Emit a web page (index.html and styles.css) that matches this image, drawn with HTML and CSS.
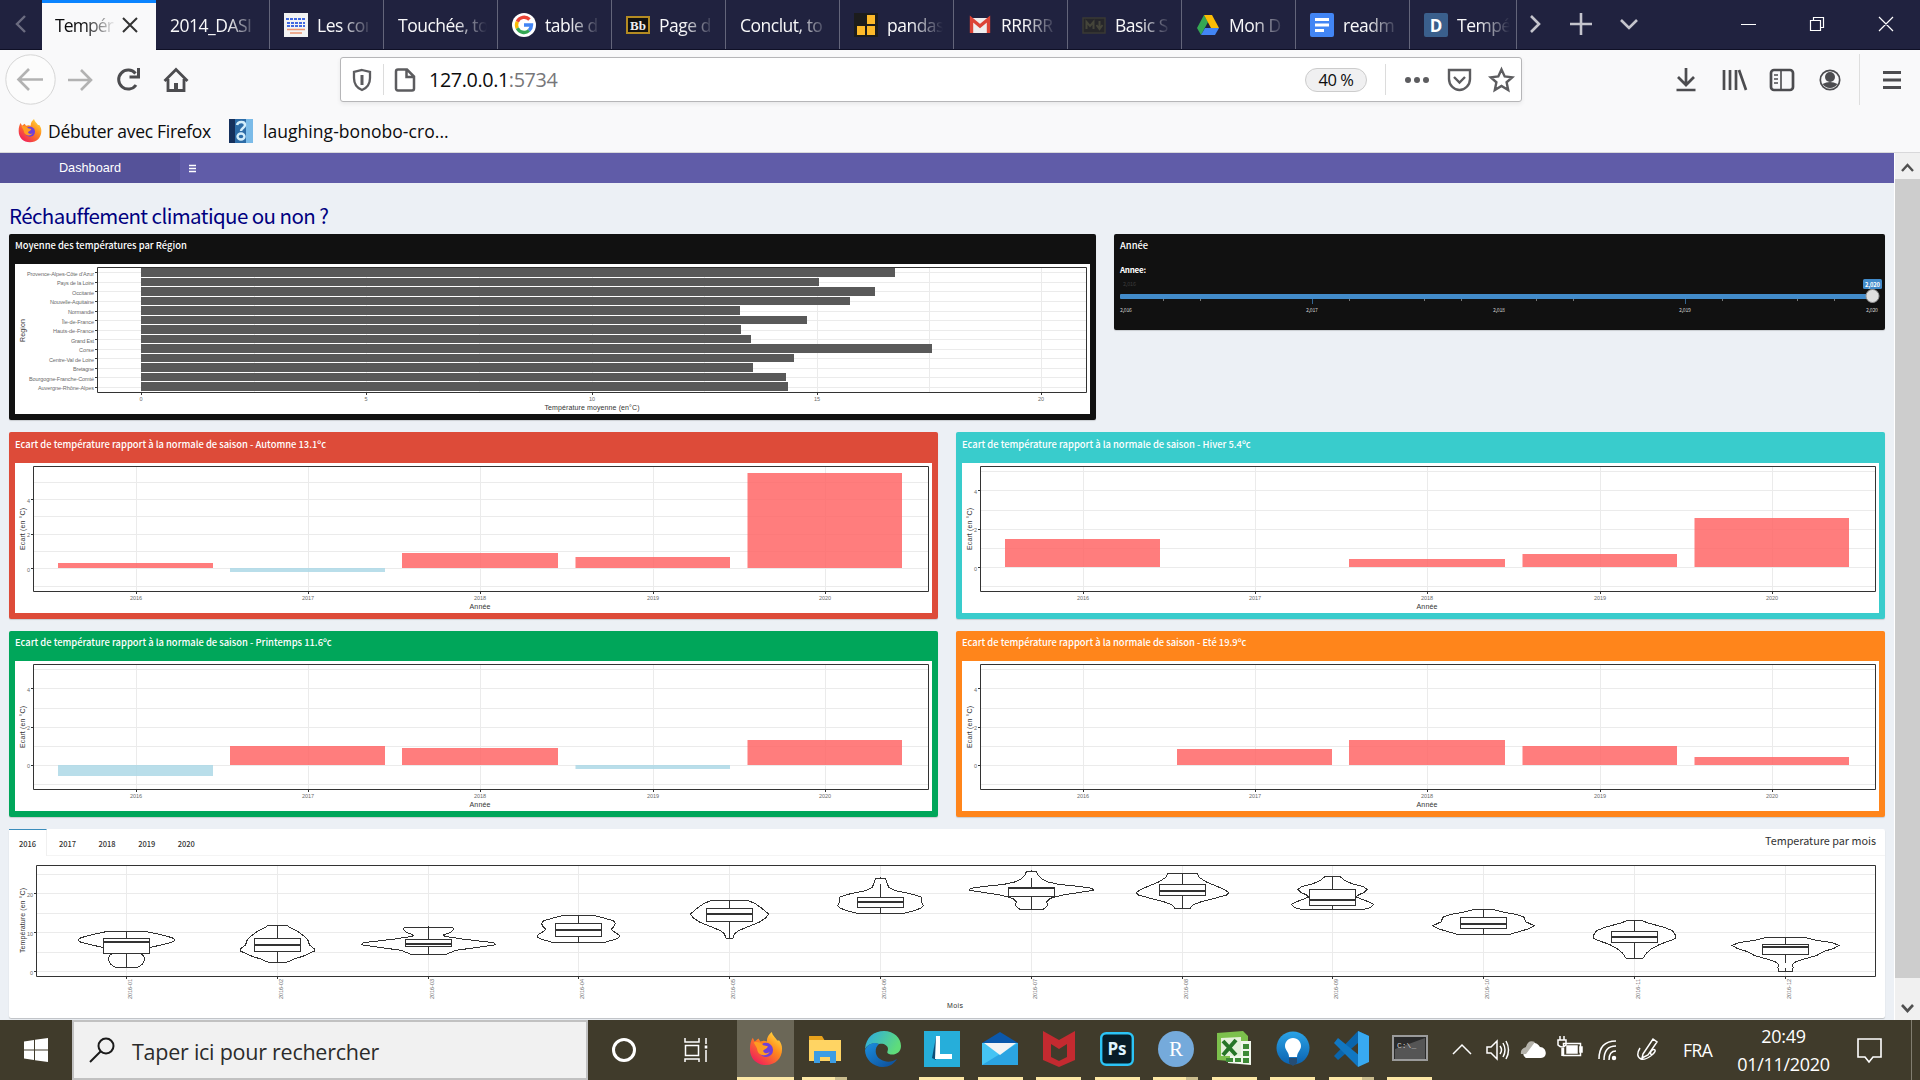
FILE: index.html
```html
<!DOCTYPE html>
<html lang="fr">
<head>
<meta charset="utf-8">
<title>Températures</title>
<link rel="stylesheet" href="styles.css">
</head>
<body>
<svg class="defs" width="0" height="0">
  <defs>
    <linearGradient id="fox" x1="1" y1="0" x2="0.2" y2="1"><stop offset="0" stop-color="#fff04a"/><stop offset=".45" stop-color="#ff8a1c"/><stop offset="1" stop-color="#f0195e"/></linearGradient>
    <linearGradient id="edgeA" x1="0" y1="0" x2="1" y2=".4"><stop offset="0" stop-color="#2aa8e8"/><stop offset="1" stop-color="#5fdc7a"/></linearGradient>
    <linearGradient id="edgeB" x1="0" y1="0" x2="1" y2="1"><stop offset="0" stop-color="#1b8fe0"/><stop offset="1" stop-color="#0c4a94"/></linearGradient>
    <linearGradient id="bulb" x1="0" y1="0" x2="0" y2="1"><stop offset="0" stop-color="#2ba3e6"/><stop offset="1" stop-color="#0b62b0"/></linearGradient>
    <symbol id="firefox" viewBox="0 0 36 36"><path fill="url(#fox)" d="M18 35C8 35 1 28 1 18c0-5 1-9 3-12l2 4 4-3 2 3c3-1 5-1 7 0 0-5 2-7 5-10 1 4 4 6 6 9l2 0c2 3 3 5 3 9 0 10-7 17-17 17z"/><circle cx="18" cy="19" r="7.500" fill="#7040d8"/><path fill="#ff9c22" d="M5 11c4-1 8 0 10 3l5 1c-1 3-4 3-5 5 1 3 5 3 7 1-2 5-11 5-13-1 0-3-2-5-4-9z"/></symbol>
  </defs>
</svg>

<header class="tabbar">
  <svg class="scroll-prev" width="42" height="50" viewBox="0 0 42 50"><path d="M25 16l-8 8 8 8" fill="none" stroke="#6b6c80" stroke-width="2.4"/></svg>
  <div class="tab active"><span class="label">Tempér</span><svg width="16" height="16" viewBox="0 0 16 16"><path d="M1 1l14 14M15 1L1 15" stroke="#333" stroke-width="2"/></svg></div>
  <div class="tab"><span class="label">2014_DASI</span></div>
  <div class="tab"><svg width="24" height="24" viewBox="0 0 24 24"><path fill="#f3f3f3" d="M0 0h24v24H0z"/><path d="M2 6h20M3 10h18M3 13h18" stroke="#4168e0" stroke-width="2" stroke-dasharray="3 1"/><path d="M3 16.500h18M6 20h12" stroke="#ec9470" stroke-width="1.4"/></svg><span class="label">Les coı</span></div>
  <div class="tab"><span class="label">Touchée, to</span></div>
  <div class="tab"><svg width="24" height="24" viewBox="0 0 24 24"><circle cx="12" cy="12" r="12" fill="#fff"/><g fill="none" stroke-width="3.400"><path stroke="#ea4335" d="M17.500 6.500a7.500 7.500 0 0 0-12.200 2.200"/><path stroke="#fbbc05" d="M5.300 8.700a7.500 7.500 0 0 0 0 6.600"/><path stroke="#34a853" d="M5.300 15.300a7.500 7.500 0 0 0 11.700 2.200"/><path stroke="#4285f4" d="M17 17.500A7.500 7.500 0 0 0 19.500 12H12"/></g></svg><span class="label">table d</span></div>
  <div class="tab"><svg width="24" height="24" viewBox="0 0 24 24"><path fill="#111" stroke="#b48b22" stroke-width="2" d="M1 4h22v16H1z"/><text x="12" y="17" class="ico-serif" text-anchor="middle">Bb</text></svg><span class="label">Page d</span></div>
  <div class="tab"><span class="label">Conclut, to</span></div>
  <div class="tab"><svg width="24" height="24" viewBox="0 0 24 24"><path fill="#1c1c1c" d="M0 0h24v24H0z"/><path fill="#fdb92a" d="M13 2h8v9h-8zM3 13h8v9H3zM13 13h8v9h-8z"/></svg><span class="label">pandas</span></div>
  <div class="tab"><svg width="24" height="24" viewBox="0 0 24 24"><path fill="#eee" d="M2 5h20v15H2z"/><path d="M3.500 20V6l8.500 7 8.500-7v14" fill="none" stroke="#dc4437" stroke-width="3.4"/></svg><span class="label">RRRRR</span></div>
  <div class="tab"><svg width="24" height="24" viewBox="0 0 24 24"><path fill="#26262a" stroke="#3a3a34" stroke-width="1.500" d="M1 5h22v15H1z"/><path d="M4.500 16V9l3.500 4 3.500-4v7M17.500 8v7m-3-3l3 4 3-4" fill="none" stroke="#45453a" stroke-width="2"/></svg><span class="label">Basic S</span></div>
  <div class="tab"><svg width="24" height="24" viewBox="0 0 24 24"><path fill="#34a853" d="M8 2L1 15l4 7L12 9z"/><path fill="#fbbc05" d="M8 2h8l7 13h-8z"/><path fill="#4285f4" d="M9 15h14l-4 7H5z"/></svg><span class="label">Mon D</span></div>
  <div class="tab"><svg width="24" height="24" viewBox="0 0 24 24"><rect width="24" height="24" rx="2" fill="#4285f4"/><path d="M5 6.500h14M5 12h14M5 17.500h9" stroke="#fff" stroke-width="3"/></svg><span class="label">readm</span></div>
  <div class="tab last"><svg width="24" height="24" viewBox="0 0 24 24"><rect width="24" height="24" rx="2" fill="#3a5f8c"/><text x="12" y="18.500" class="ico-bold" text-anchor="middle">D</text></svg><span class="label">Tempé</span></div>
  <svg class="tab-tools" width="140" height="50" viewBox="0 0 140 50" fill="none" stroke="#c4c4cc" stroke-width="2.600"><path d="M14 16l8 8-8 8M53 24h22M64 13v22M104 20l8 8 8-8"/></svg>
  <svg class="win-tools" width="180" height="50" viewBox="0 0 180 50" fill="none" stroke="#fff" stroke-width="1.200"><path d="M1 24.500h15M70.500 20.500h10v10h-10zM73.500 20v-2.500h10v10h-3M139 17l14 14m0-14l-14 14"/></svg>
</header>

<nav class="toolbar">
  <svg width="200" height="60" viewBox="0 0 200 60" fill="none" stroke-width="2.600"><circle cx="30.500" cy="29.500" r="24.700" stroke="#d6d6d6" stroke-width="1" fill="#fcfcfc"/><path stroke="#b2b2b2" d="M43 29.500H19M29 19L18.500 29.500 29 40"/><path stroke="#b2b2b2" d="M68 30h22M81 20l10 10-10 10"/><g stroke="#4c4c4f" stroke-width="3"><path d="M136 35a9.500 9.500 0 1 1-.5-11.500"/><path d="M138.500 18v9h-9"/><path d="M164.500 31L176 19.500 187.500 31M168 29v11.500h16V29" stroke-width="2.800"/><path d="M176 40v-7" stroke-width="4"/></g></svg>
  <div class="urlbar">
    <svg class="shield" width="20" height="24" viewBox="0 0 20 24" fill="none" stroke="#5c5c5f" stroke-width="2.300"><path d="M10 2L18 4v6c0 6-3 10-8 12-5-2-8-6-8-12V4z"/><path d="M10 7v10" stroke-width="3"/></svg>
    <i class="rule"></i>
    <svg class="page" width="22" height="24" viewBox="0 0 22 24" fill="none" stroke="#5c5c5f" stroke-width="2.500"><path d="M2 3.500C2 2 3 1.500 4 1.500h9l7 7v12c0 1.500-.7 2-2 2H4c-1.300 0-2-.7-2-2zM12.500 2v7H20"/></svg>
    <span class="address">127.0.0.1<em>:5734</em></span>
    <span class="zoom">40 %</span>
    <i class="rule"></i>
    <svg class="url-tools" width="112" height="26" viewBox="0 0 112 26" fill="none" stroke="#5c5c5f" stroke-width="2.400"><g fill="#5c5c5f" stroke="none"><circle cx="6" cy="13" r="3"/><circle cx="15" cy="13" r="3"/><circle cx="24" cy="13" r="3"/></g><path d="M47 3h21v9c0 6-5 11-10.500 11S47 18 47 12zM52 10l5.500 5.500L63 10M99.500 2.500l3.200 7 7.500.8-5.600 5 1.600 7.700-6.700-4-6.700 4 1.600-7.700-5.600-5 7.500-.8z"/></svg>
  </div>
  <svg class="right-tools" width="240" height="60" viewBox="0 0 240 60" fill="none" stroke="#4c4c4f" stroke-width="2.700"><path d="M6 18v17M-2 27l8 8 8-8M-3.500 40h19"/><path d="M44 20v20M50 20v20M56 20v20M59 20l7 20"/><rect x="91" y="20" width="22" height="20" rx="3"/><path d="M101 20v20M94 25h4m-4 4h4m-4 4h4" stroke-width="1.600"/><circle cx="150" cy="30" r="9.700" stroke-width="1.700"/><g fill="#4c4c4f" stroke="none"><circle cx="150" cy="27" r="5"/><path d="M142.500 34q7.500-4 15 0-3 4-7.500 4t-7.500-4z"/></g><path d="M179.500 4v51" stroke="#dedede" stroke-width="1"/><path d="M203 22.500h18M203 30h18M203 37.500h18" stroke-width="3"/></svg>
</nav>

<div class="bookmarks">
  <svg width="24" height="24"><use href="#firefox"/></svg><span class="b1">Débuter avec Firefox</span>
  <svg class="bono" width="24" height="24" viewBox="0 0 24 24"><path fill="#15305c" d="M0 0h24v24H0z"/><path fill="#2d6ca7" d="M6 0h18v24H6z"/><path fill="#7bbbe8" d="M17 0h7v24h-7z"/><path d="M8 6c1-4 8-4 8 0 0 3-4 3-4 6" fill="none" stroke="#d4eefb" stroke-width="2.500"/><ellipse cx="12" cy="17.500" rx="3.500" ry="3" fill="none" stroke="#d4eefb" stroke-width="2.400"/></svg><span class="b2">laughing-bonobo-cro...</span>
</div>

<div class="viewport">
  <div class="page-body">
    <div class="app-head"><span class="brand">Dashboard</span><svg width="8" height="30" viewBox="0 0 8 30"><path d="M1 12.500h7M1 15.500h7M1 18.500h7" stroke="#fff" stroke-width="1.300"/></svg></div>
    <main>
      <h1>Réchauffement climatique ou non ?</h1>
      <div class="row top">
        <section class="card black region">
          <h2>Moyenne des températures par Région</h2>
          <svg class="plot" width="1075" height="150" viewBox="15 264 1075 150">
            <path class="grid" d="M141.500 268v124M254.500 268v124M366.500 268v124M479.500 268v124M592.500 268v124M704.500 268v124M817.500 268v124M929.500 268v124M1041.500 268v124M98 272.500h988M98 282.500h988M98 291.500h988M98 301.500h988M98 311.500h988M98 320.500h988M98 330.500h988M98 339.500h988M98 349.500h988M98 358.500h988M98 368.500h988M98 377.500h988M98 387.500h988"/>
            <path fill="#595959" d="M141 268h754v9H141zM141 278h678v8H141zM141 287h734v9H141zM141 297h709v8H141zM141 306h599v9H141zM141 316h666v8H141zM141 325h600v9H141zM141 335h610v8H141zM141 344h791v9H141zM141 354h653v8H141zM141 363h612v9H141zM141 373h645v8H141zM141 382h647v9H141z"/>
            <path class="frame" d="M97.500 267.500h989v125h-989z"/>
            <path class="frame" d="M95 272.500h2M95 282.500h2M95 291.500h2M95 301.500h2M95 311.500h2M95 320.500h2M95 330.500h2M95 339.500h2M95 349.500h2M95 358.500h2M95 368.500h2M95 377.500h2M95 387.500h2M141.500 393v2M366.500 393v2M592.500 393v2M817.500 393v2M1041.500 393v2"/>
            <g class="tick" text-anchor="end">
              <text x="94" y="276" textLength="67">Provence-Alpes-Côte d'Azur</text><text x="94" y="285" textLength="37">Pays de la Loire</text><text x="94" y="295" textLength="22">Occitanie</text><text x="94" y="304" textLength="44">Nouvelle-Aquitaine</text><text x="94" y="314" textLength="26">Normandie</text><text x="94" y="324" textLength="32">Île-de-France</text><text x="94" y="333" textLength="41">Hauts-de-France</text><text x="94" y="343" textLength="23">Grand Est</text><text x="94" y="352" textLength="15">Corse</text><text x="94" y="362" textLength="45">Centre-Val de Loire</text><text x="94" y="371" textLength="21">Bretagne</text><text x="94" y="381" textLength="65">Bourgogne-Franche-Comté</text><text x="94" y="390" textLength="56">Auvergne-Rhône-Alpes</text>
            </g>
            <g class="tick" text-anchor="middle"><text x="141" y="401">0</text><text x="366" y="401">5</text><text x="592" y="401">10</text><text x="817" y="401">15</text><text x="1041" y="401">20</text></g>
            <text class="axis" x="592" y="410" text-anchor="middle" textLength="95">Température moyenne (en°C)</text>
            <text class="axis" transform="translate(25 342) rotate(-90)" textLength="23">Region</text>
          </svg>
        </section>
        <section class="card black year">
          <h2>Année</h2>
          <svg width="771" height="66" viewBox="1114 264 771 66">
            <text x="1120" y="273" class="ann" textLength="26">Annee:</text>
            <text x="1123" y="285.500" class="dim" textLength="13">2,016</text>
            <path stroke="#777" d="M1163.500 299v2M1200.500 299v2M1349.500 299v2M1424.500 299v2M1461.500 299v2M1536.500 299v2M1573.500 299v2M1722.500 299v2M1797.500 299v2M1834.500 299v2"/>
            <path stroke="#428bca" opacity=".7" d="M1312.500 299v5M1685.500 299v5"/>
            <rect x="1120" y="294" width="755" height="5" rx="1" fill="#428bca"/>
            <rect x="1863" y="279" width="19" height="10" rx="1.500" fill="#428bca"/>
            <text x="1865" y="286.500" class="bubble" textLength="15">2,020</text>
            <circle cx="1872.500" cy="296" r="6.500" fill="#dedede" stroke="#999"/>
            <g class="val" text-anchor="middle"><text x="1126" y="311.500" textLength="12">2,016</text><text x="1312" y="311.500" textLength="12">2,017</text><text x="1499" y="311.500" textLength="12">2,018</text><text x="1685" y="311.500" textLength="12">2,019</text><text x="1872" y="311.500" textLength="12">2,020</text></g>
          </svg>
        </section>
      </div>

      <div class="row seasons">
        <section class="card red">
          <h2>Ecart de température rapport à la normale de saison - Automne 13.1ºc</h2>
          <svg class="plot" width="917" height="150" viewBox="15 463 917 150">
            <path class="grid" d="M136.500 467v124M308.500 467v124M480.500 467v124M653.500 467v124M825.500 467v124M34 482.500h895M34 499.500h895M34 516.500h895M34 534.500h895M34 551.500h895M34 568.500h895M34 586.500h895"/>
            <path class="hot" d="M58 563h155v5H58zM402 553h156v15H402zM575.500 557H730v11H575.500zM747.500 473H902v95H747.500z"/><path class="cold" d="M230 568h155v4H230z"/>
            <path class="frame" d="M33.500 466.500h895v125h-895zM31 499.500h2M31 534.500h2M31 568.500h2M136.500 592v2M308.500 592v2M480.500 592v2M653.500 592v2M825.500 592v2"/>
            <g class="tick" text-anchor="middle"><text x="28.500" y="503">4</text><text x="28.500" y="537">2</text><text x="28.500" y="572">0</text><text x="136" y="600">2016</text><text x="308" y="600">2017</text><text x="480" y="600">2018</text><text x="653" y="600">2019</text><text x="825" y="600">2020</text></g>
            <text class="axis" x="480" y="609" text-anchor="middle" textLength="21">Année</text>
            <text class="axis" transform="translate(25 550) rotate(-90)" textLength="42">Ecart (en °C)</text>
          </svg>
        </section>
        <section class="card cyan">
          <h2>Ecart de température rapport à la normale de saison - Hiver 5.4ºc</h2>
          <svg class="plot" width="917" height="150" viewBox="15 463 917 150">
            <path class="grid" d="M136.500 467v124M308.500 467v124M480.500 467v124M653.500 467v124M825.500 467v124M34 471.500h895M34 490.500h895M34 510.500h895M34 529.500h895M34 548.500h895M34 567.500h895M34 586.500h895"/>
            <path class="hot" d="M58 539h155v28H58zM402 559h156v8H402zM575.500 554H730v13H575.500zM747.500 518H902v49H747.500z"/>
            <path class="frame" d="M33.500 466.500h895v125h-895zM31 490.500h2M31 529.500h2M31 567.500h2M136.500 592v2M308.500 592v2M480.500 592v2M653.500 592v2M825.500 592v2"/>
            <g class="tick" text-anchor="middle"><text x="28.500" y="494">4</text><text x="28.500" y="532">2</text><text x="28.500" y="571">0</text><text x="136" y="600">2016</text><text x="308" y="600">2017</text><text x="480" y="600">2018</text><text x="653" y="600">2019</text><text x="825" y="600">2020</text></g>
            <text class="axis" x="480" y="609" text-anchor="middle" textLength="21">Année</text>
            <text class="axis" transform="translate(25 550) rotate(-90)" textLength="42">Ecart (en °C)</text>
          </svg>
        </section>
      </div>

      <div class="row seasons lower">
        <section class="card green">
          <h2>Ecart de température rapport à la normale de saison - Printemps 11.6ºc</h2>
          <svg class="plot" width="917" height="150" viewBox="15 661 917 150">
            <path class="grid" d="M136.500 665v124M308.500 665v124M480.500 665v124M653.500 665v124M825.500 665v124M34 669.500h895M34 688.500h895M34 708.500h895M34 727.500h895M34 746.500h895M34 765.500h895M34 784.500h895"/>
            <path class="hot" d="M230 746h155v19H230zM402 748h156v17H402zM747.500 740H902v25H747.500z"/><path class="cold" d="M58 765h155v11H58zM575.500 765H730v4H575.500z"/>
            <path class="frame" d="M33.500 664.500h895v125h-895zM31 688.500h2M31 727.500h2M31 765.500h2M136.500 790v2M308.500 790v2M480.500 790v2M653.500 790v2M825.500 790v2"/>
            <g class="tick" text-anchor="middle"><text x="28.500" y="692">4</text><text x="28.500" y="730">2</text><text x="28.500" y="768">0</text><text x="136" y="798">2016</text><text x="308" y="798">2017</text><text x="480" y="798">2018</text><text x="653" y="798">2019</text><text x="825" y="798">2020</text></g>
            <text class="axis" x="480" y="807" text-anchor="middle" textLength="21">Année</text>
            <text class="axis" transform="translate(25 748) rotate(-90)" textLength="42">Ecart (en °C)</text>
          </svg>
        </section>
        <section class="card orange">
          <h2>Ecart de température rapport à la normale de saison - Eté 19.9ºc</h2>
          <svg class="plot" width="917" height="150" viewBox="15 661 917 150">
            <path class="grid" d="M136.500 665v124M308.500 665v124M480.500 665v124M653.500 665v124M825.500 665v124M34 669.500h895M34 688.500h895M34 708.500h895M34 727.500h895M34 746.500h895M34 765.500h895M34 784.500h895"/>
            <path class="hot" d="M230 749h155v16H230zM402 740h156v25H402zM575.500 746H730v19H575.500zM747.500 757H902v8H747.500z"/>
            <path class="frame" d="M33.500 664.500h895v125h-895zM31 688.500h2M31 727.500h2M31 765.500h2M136.500 790v2M308.500 790v2M480.500 790v2M653.500 790v2M825.500 790v2"/>
            <g class="tick" text-anchor="middle"><text x="28.500" y="692">4</text><text x="28.500" y="730">2</text><text x="28.500" y="768">0</text><text x="136" y="798">2016</text><text x="308" y="798">2017</text><text x="480" y="798">2018</text><text x="653" y="798">2019</text><text x="825" y="798">2020</text></g>
            <text class="axis" x="480" y="807" text-anchor="middle" textLength="21">Année</text>
            <text class="axis" transform="translate(25 748) rotate(-90)" textLength="42">Ecart (en °C)</text>
          </svg>
        </section>
      </div>

      <section class="monthly">
        <div class="year-tabs"><span class="on">2016</span><span>2017</span><span>2018</span><span>2019</span><span>2020</span><b>Temperature par mois</b></div>
        <svg width="1876" height="162" viewBox="9 856 1876 162">
          <path class="grid" d="M37 874.500h1838M37 893.500h1838M37 913.500h1838M37 932.500h1838M37 952.500h1838M37 971.500h1838M126.500 866v110M277.500 866v110M428.500 866v110M578.500 866v110M729.500 866v110M880.500 866v110M1031.500 866v110M1182.500 866v110M1332.500 866v110M1483.500 866v110M1634.500 866v110M1785.500 866v110"/>
          <g class="violins">
            <g transform="translate(126.500 815) scale(.421 .3333)"><path id="v1" d="M0 350H48L75 357 105 367Q125 375 105 383L75 392 54 398 36 417Q44 425 42 437 40 449 26 457H0"/><use href="#v1" transform="scale(-1 1)"/><path d="M0 350V457"/><path class="box" d="M-54 370H54V415H-54z"/><path class="med" d="M-54 380H54"/></g>
            <g transform="translate(277.500 815) scale(.421 .3333)"><path id="v2" d="M0 331H22L30 338 50 351 65 365 72 375 76 390 88 402V408L78 414 60 424 40 432 32 437 20 442H0"/><use href="#v2" transform="scale(-1 1)"/><path d="M0 331V442"/><path class="box" d="M-54 370H54V409H-54z"/><path class="med" d="M-54 389H54"/></g>
            <g transform="translate(428.500 815) scale(.421 .3333)"><path id="v3" d="M0 337H57L60 344 52 352 36 360 40 365 55 367 80 372 120 378 155 383 160 389 140 393 100 400 65 406 42 418H0"/><use href="#v3" transform="scale(-1 1)"/><path d="M0 334V418"/><path class="box" d="M-54 373H54V394H-54z"/><path class="med" d="M-54 386H54"/></g>
            <g transform="translate(578.500 815) scale(.421 .3333)"><path id="v4" d="M0 301H36L60 309 82 317 88 325 84 335 78 343 84 350 98 361 96 368 85 374 62 382H0"/><use href="#v4" transform="scale(-1 1)"/><path d="M0 301V382"/><path class="box" d="M-54 325H54V364H-54z"/><path class="med" d="M-54 344H54"/></g>
            <g transform="translate(729.500 815) scale(.421 .3333)"><path id="v5" d="M0 256H42L60 265 75 278 93 297 85 310 70 322 40 337 20 348 12 357 8 370H0"/><use href="#v5" transform="scale(-1 1)"/><path d="M0 256V370"/><path class="box" d="M-54 280H54V319H-54z"/><path class="med" d="M-54 297H54"/></g>
            <g transform="translate(880.500 815) scale(.421 .3333)"><path id="v6" d="M0 187V190H12L16 207 20 217 35 227 60 233 80 239 98 247V262L102 272 95 280 75 289 56 295H0"/><use href="#v6" transform="scale(-1 1)"/><path d="M0 207V295"/><path class="box" d="M-54 247H54V277H-54z"/><path class="med" d="M-54 261H54"/></g>
            <g transform="translate(1031.500 815) scale(.421 .3333)"><path id="v7" d="M0 166V169H12L15 180 25 192 40 201 65 208 110 214 145 220 147 226 110 233 70 241 45 250 36 260 38 270 33 279 27 283H0"/><use href="#v7" transform="scale(-1 1)"/><path d="M0 189V283"/><path class="box" d="M-54 217H54V244H-54z"/><path class="med" d="M-54 220H54"/></g>
            <g transform="translate(1182.500 815) scale(.421 .3333)"><path id="v8" d="M0 175H34L40 187 55 200 80 213 100 224 110 233 105 240 85 247 60 255 40 262 25 270 18 280H0"/><use href="#v8" transform="scale(-1 1)"/><path d="M0 175V280"/><path class="box" d="M-54 208H54V241H-54z"/><path class="med" d="M-54 228H54"/></g>
            <g transform="translate(1332.500 815) scale(.421 .3333)"><path id="v9" d="M0 184H17L30 197 50 208 72 214 82 223 75 232 60 241 57 246 70 253 85 260 98 268 90 278 73 283H0"/><use href="#v9" transform="scale(-1 1)"/><path d="M0 184V283"/><path class="box" d="M-54 223H54V271H-54z"/><path class="med" d="M-54 255H54"/></g>
            <g transform="translate(1483.500 815) scale(.421 .3333)"><path id="v10" d="M0 283H20L45 291 80 299 97 307 100 320 120 332 110 340 85 350 62 358H0"/><use href="#v10" transform="scale(-1 1)"/><path d="M0 283V358"/><path class="box" d="M-54 307H54V340H-54z"/><path class="med" d="M-54 327H54"/></g>
            <g transform="translate(1634.500 815) scale(.421 .3333)"><path id="v11" d="M0 317H17L35 325 70 337 90 347 97 360V370L85 377 60 388 40 402 28 415 20 430H0"/><use href="#v11" transform="scale(-1 1)"/><path d="M0 317V430"/><path class="box" d="M-54 349H54V382H-54z"/><path class="med" d="M-54 366H54"/></g>
            <g transform="translate(1785.500 815) scale(.421 .3333)"><path id="v12" d="M0 367H45L70 375 110 383 127 391 115 400 90 410 75 421 50 430 25 440 16 448 18 457 17 469H0"/><use href="#v12" transform="scale(-1 1)"/><path d="M0 367V443M0 460V469"/><path class="box" d="M-54 388H54V418H-54z"/><path class="med" d="M-54 396H54"/></g>
          </g>
          <path class="frame" d="M36.500 865.500h1839v111h-1839zM34 893.500h2M34 932.500h2M34 971.500h2M126.500 977v2M277.500 977v2M428.500 977v2M578.500 977v2M729.500 977v2M880.500 977v2M1031.500 977v2M1182.500 977v2M1332.500 977v2M1483.500 977v2M1634.500 977v2M1785.500 977v2"/>
          <g class="tick"><text x="27" y="897">20</text><text x="27" y="936">10</text><text x="30" y="975">0</text>
            <text transform="translate(132 999) rotate(-90)" textLength="20">2016-01</text><text transform="translate(283 999) rotate(-90)" textLength="20">2016-02</text><text transform="translate(434 999) rotate(-90)" textLength="20">2016-03</text><text transform="translate(584 999) rotate(-90)" textLength="20">2016-04</text><text transform="translate(735 999) rotate(-90)" textLength="20">2016-05</text><text transform="translate(886 999) rotate(-90)" textLength="20">2016-06</text><text transform="translate(1037 999) rotate(-90)" textLength="20">2016-07</text><text transform="translate(1188 999) rotate(-90)" textLength="20">2016-08</text><text transform="translate(1338 999) rotate(-90)" textLength="20">2016-09</text><text transform="translate(1489 999) rotate(-90)" textLength="20">2016-10</text><text transform="translate(1640 999) rotate(-90)" textLength="20">2016-11</text><text transform="translate(1791 999) rotate(-90)" textLength="20">2016-12</text></g>
          <text class="axis" x="955" y="1008" text-anchor="middle" textLength="16">Mois</text>
          <text class="axis" transform="translate(25 953) rotate(-90)" textLength="65">Température (en °C)</text>
        </svg>
      </section>
    </main>
  </div>
  <div class="scrollbar">
    <svg width="26" height="26" viewBox="0 0 26 26"><path d="M7 18l5.500-6 5.500 6" fill="none" stroke="#505050" stroke-width="2.400"/></svg>
    <div class="thumb"></div>
    <svg width="26" height="42" viewBox="0 0 26 42"><path d="M7 27l5.500 6 5.500-6" fill="none" stroke="#505050" stroke-width="2.600"/></svg>
  </div>
</div>

<footer class="taskbar">
  <svg class="start" width="72" height="60" viewBox="0 0 72 60"><path fill="#fff" d="M24 21.500l10-1.500v9.500H24zM35 19.800L48 18v11.500H35zM24 30.500h10V40l-10-1.500zM35 30.500h13V42l-13-1.800z"/></svg>
  <div class="search"><svg width="27" height="26" viewBox="0 0 27 26" fill="none" stroke="#1b1b1b" stroke-width="2"><circle cx="16" cy="9" r="7.500"/><path d="M10.500 14.500L0 25"/></svg><span>Taper ici pour rechercher</span></div>
  <svg class="cortana" width="149" height="60" viewBox="588 0 149 60" fill="none" stroke="#fff"><circle cx="624" cy="30" r="10.500" stroke-width="3"/><path stroke-width="1.500" d="M685 18v4h14v-4M685 42v-3h14v3M685.500 25.500h13v10h-13zM706 18v6M706 30v12"/><path stroke-width="2.600" d="M706 25.500v3"/></svg>
  <div class="app current"><svg width="34" height="36"><use href="#firefox" width="34" height="36"/></svg></div>
  <div class="app run multi"><svg width="34" height="34" viewBox="0 0 34 34"><path fill="#e8a21c" d="M1 4h13l3 5H1z"/><path fill="#ffd463" d="M1 8h32v21H1z"/><path fill="#3c9de4" d="M6 19h22v12h-6v-6h-10v6H6z"/></svg></div>
  <div class="app"><svg width="36" height="36" viewBox="0 0 36 36"><path fill="url(#edgeA)" d="M0 18C1 6 9 0 19 0c10 0 17 7 17 15 0 7-7 10-12 8-3-1-1-3-1-5 0-4-5-6-9-5C8 11 3 13 0 18z"/><path fill="url(#edgeB)" d="M0 19c3-7 10-8 14-6-5 4-4 12 1 15 6 4 12 3 17 0-3 5-8 8-14 8C8 36 0 28 0 19z"/></svg></div>
  <div class="app run"><svg width="36" height="36" viewBox="0 0 36 36"><path fill="#26aeda" d="M0 0h36v36H0z"/><path fill="#0d4e78" d="M12 6l-4 21 4 2z"/><path fill="#fff" d="M12 5h4v18h12v5H11z"/></svg></div>
  <div class="app run"><svg width="36" height="36" viewBox="0 0 36 36"><path fill="#0b58ab" d="M0 12L18 1l18 11v6H0z"/><path fill="#2ba4e2" d="M0 12h36v22H0z"/><path fill="#45c4f4" d="M0 34l36-22H0z"/><path fill="#f4f4f4" d="M2 12h32L18 24z"/></svg></div>
  <div class="app run"><svg width="34" height="36" viewBox="0 0 34 36"><path fill="#c42a30" d="M1 0l16 9L33 0v29l-16 7-16-7zM9 13v13l8 4 8-4V13l-8 5z" fill-rule="evenodd"/></svg></div>
  <div class="app run"><svg width="34" height="34" viewBox="0 0 34 34"><rect x="1.200" y="1.200" width="31.600" height="31.600" rx="5" fill="#071d28" stroke="#2cc4f6" stroke-width="2.400"/><text x="17" y="23" text-anchor="middle" class="ps">Ps</text></svg></div>
  <div class="app run multi"><svg width="36" height="36" viewBox="0 0 36 36"><circle cx="18" cy="18" r="18" fill="#75aadb"/><text x="18" y="25" text-anchor="middle" class="r">R</text></svg></div>
  <div class="app run"><svg width="36" height="36" viewBox="0 0 36 36"><path fill="#f1f7ec" d="M12 10h23v24l-23-2z"/><path fill="#7cc04c" d="M1 2L27 0l5 5v5H14v20L1 29z"/><path fill="#e4f0da" d="M5 7l20-1v19H5z"/><path fill="#3d8a36" d="M27 13h6v5h-6zM27 20h6v5h-6zM27 27h6v5h-6zM19 27h6v4h-6zM10 27h7v4h-7z"/><path d="M7 10l13 14M20 9L7 24" stroke="#267527" stroke-width="4"/></svg></div>
  <div class="app run"><svg width="34" height="36" viewBox="0 0 34 36"><circle cx="17" cy="17" r="16.500" fill="url(#bulb)"/><path fill="#fff" d="M17 7c-5 0-8 4-8 8s4 6 4 11h8c0-5 4-7 4-11s-3-8-8-8z"/><path fill="#264d74" d="M13 27h8v5l-4 3-4-3z"/></svg></div>
  <div class="app run multi"><svg width="36" height="36" viewBox="0 0 36 36"><path fill="#0a65ac" d="M25 0l11 5-11 7L5 29l-4-4z"/><path fill="#1177c2" d="M5 7l22 18-2 11L1 12z"/><path fill="#38a9f1" d="M25 0l11 5v26l-11 5z"/></svg></div>
  <div class="app run"><svg width="36" height="28" viewBox="0 0 36 28"><path fill="#2b2b2b" stroke="#9b9b9b" stroke-width="2" d="M1 1h34v24H1z"/><path fill="#555" d="M3 14L33 3v21H3z"/><text x="5" y="13" class="cmd">C:\_</text></svg></div>
  <svg class="tray" width="230" height="60" viewBox="1440 0 230 60" fill="none" stroke="#fff" stroke-width="1.500"><path d="M1453 34l9-9 9 9M1487 27h4l6-6v18l-6-6h-4zM1500 26q3 4 0 8M1503 23q4 7 0 14M1506 21q5 9 0 18"/><path fill="#fff" stroke="none" d="M1526 38a5 5 0 0 1 0-9c1-8 11-8 14-2 7 0 8 11 1 11z"/><path fill="#b5b3ab" stroke="none" d="M1521 34q-1-5 5-7 2-8 9-5l-9 12z"/><path d="M1563.500 23.500h17v12h-17zM1558 20h8v5q-4 4-8 0zM1560 20v-4m4 0v4M1562 28v8"/><path fill="#fff" d="M1567 26h10v7h-10zM1580 27h2v5h-2z"/><path d="M1599 39q0-18 17-18M1604 40q0-14 12-14M1609 40q0-9 7-9"/><circle cx="1614" cy="38" r="1.500" fill="#fff"/><path d="M1643 34l10-15 4 3-9 13-6 3zM1640 28q-5 8 1 11c5 2 16-7 14-9s-7 3-3 5"/></svg>
  <span class="lang">FRA</span>
  <div class="clock"><span>20:49</span><span>01/11/2020</span></div>
  <svg class="notif" width="60" height="60" viewBox="0 0 60 60" fill="none" stroke="#fff" stroke-width="1.600"><path d="M5 19h23v18h-8l-4 5-4-5H5z"/><path d="M58.500 0v60" stroke="#817d70" stroke-width="1"/></svg>
</footer>
</body>
</html>
```
FILE: styles.css
```css
* { box-sizing: border-box; }
body { margin: 0; width: 1920px; height: 1080px; overflow: hidden; background: #f9f9fa; font-family: "Open Sans", "Noto Sans", sans-serif; color: #0c0c0d; display: flex; flex-direction: column; }
svg { display: block; flex: none; overflow: visible; }
.defs { position: absolute; }

.tabbar { height: 50px; flex: none; background: #20223f; border-bottom: 1px solid #0f1026; display: flex; align-items: stretch; }
.tab { width: 114px; flex: none; padding: 0 10px 0 14px; display: flex; align-items: center; gap: 9px; border-right: 1px solid #63657a; color: #f9f9fa; }
.tab.active { width: 114px; height: 50px; background: #f9f9fa; color: #0c0c0d; border-top: 3px solid #0a84ff; border-right: 0; padding: 0 18px 3px 13px; gap: 6px; }
.tab.last { width: 107px; padding-right: 6px; }
.label { flex: 1; min-width: 0; white-space: nowrap; font-size: 17.500px; letter-spacing: -0.5px; line-height: 26px; -webkit-mask-image: linear-gradient(to left, transparent, #000 32px); mask-image: linear-gradient(to left, transparent, #000 32px); }
.active .label { letter-spacing: -0.9px; }
.win-tools { margin-left: 83px; }
.ico-serif { font: bold 13px "Liberation Serif", serif; fill: #eee; }
.ico-bold { font: bold 17px "Open Sans", sans-serif; fill: #fff; }

.toolbar { height: 60px; flex: none; display: flex; }
.urlbar { margin: 7px 0 0 140px; width: 1182px; height: 45px; background: #fff; border: 1px solid #b6b6b8; border-radius: 3px; box-shadow: 0 2px 4px rgba(0,0,0,.07); display: flex; align-items: center; }
.shield { margin: 0 11px; }
.rule { width: 1px; height: 31px; background: #dcdcdc; }
.page { margin: 0 13px 0 10px; }
.address { font-size: 19.800px; letter-spacing: -0.4px; flex: 1; }
.address em { font-style: normal; color: #77777a; }
.zoom { width: 62px; height: 24px; border: 1px solid #ccc; border-radius: 12px; background: #f0f0f1; font-size: 16.500px; letter-spacing: -0.4px; line-height: 22px; text-align: center; margin-right: 18px; }
.url-tools { margin: 0 7px 0 16px; }
.right-tools { margin-left: 158px; }

.bookmarks { height: 43px; flex: none; padding: 0 0 1px 18px; display: flex; align-items: center; border-bottom: 1px solid #d8d8da; font-size: 17.500px; letter-spacing: -0.3px; white-space: nowrap; }
.b1 { width: 181px; margin-left: 6px; }
.b2 { margin-left: 10px; letter-spacing: 0.05px; }

.viewport { height: 867px; flex: none; display: flex; background: #ecf0f5; overflow: hidden; }
.page-body { width: 1894px; font-family: "Noto Sans CJK JP", "Noto Sans", sans-serif; }
.app-head { height: 30px; background: #605ca8; display: flex; color: #fff; }
.brand { width: 180px; margin-right: 8px; background: #555299; text-align: center; font: 12.700px/30px "Liberation Sans", sans-serif; }
main { padding: 0 9px; }
h1 { margin: 0; height: 51px; padding-top: 19px; font-size: 20.500px; letter-spacing: -0.580px; line-height: 26px; font-weight: 400; color: #000080; white-space: nowrap; }
.row { display: flex; gap: 18px; margin-bottom: 12px; }
.card { border-radius: 2px; box-shadow: 0 1px 1px rgba(0,0,0,.15); padding: 0 6px 6px; flex: none; }
.card h2 { margin: 0; height: 30px; padding-top: 4px; font-size: 9.400px; line-height: 15px; font-weight: 500; color: #fff; white-space: nowrap; }
.seasons .card { width: 929px; }
.seasons h2 { height: 31px; padding-top: 5px; }
.seasons.lower h2 { height: 30px; padding-top: 4px; }
.black { background: #111; }
.region { width: 1087px; }
.year { width: 771px; height: 96px; padding: 0; }
.year h2 { padding-left: 6px; }
.red { background: #dd4b39; }
.cyan { background: #39cccc; }
.green { background: #00a65a; }
.orange { background: #ff851b; }
.plot { background: #fff; }

.grid { fill: none; stroke: #ebebeb; }
.frame { fill: none; stroke: #333; }
.hot { fill: #f66; fill-opacity: .85; }
.cold { fill: #add8e6; fill-opacity: .85; }
.tick { font: 5.500px "Liberation Sans", sans-serif; fill: #6a6a6a; }
.axis { font: 7px "Liberation Sans", sans-serif; fill: #333; }
.ann { font-weight: 700; font-size: 8px; fill: #fff; }
.dim { font-size: 5.500px; fill: #3c3c3c; }
.bubble { font-size: 5.800px; font-weight: 700; fill: #fff; }
.val { font-size: 5.200px; fill: #ccc; }

.monthly { background: #fff; height: 189px; border-radius: 2px; box-shadow: 0 1px 1px rgba(0,0,0,.2); }
.year-tabs { height: 27px; border-bottom: 1px solid #f4f4f4; display: flex; font-size: 7.500px; font-weight: 500; color: #333; }
.year-tabs span { width: 37px; margin-right: 2.600px; line-height: 27px; text-align: center; border-top: 1px solid transparent; }
.year-tabs .on { border-top-color: #3c8dbc; border-right: 1px solid #f0f0f0; width: 38px; margin-right: 2px; height: 27px; background: #fff; }
.year-tabs b { margin-left: auto; padding-right: 9px; font-size: 10.800px; font-weight: 400; line-height: 22px; }
.violins path { fill: #fff; stroke: #333; stroke-width: 1px; vector-effect: non-scaling-stroke; shape-rendering: crispEdges; }
.violins .box { fill: #fff; }
.violins .med { stroke-width: 2px; }

.scrollbar { width: 26px; background: #f0f0f0; display: flex; flex-direction: column; border-left: 1px solid #fff; }
.thumb { flex: 1; background: #cdcdcd; }

.taskbar { height: 60px; flex: none; background: #403b2b; display: flex; }
.search { width: 516px; background: #f1f1f1; border: 2px solid #c1c1c1; display: flex; align-items: center; gap: 15px; padding-left: 16px; font-size: 21.500px; letter-spacing: -0.25px; color: #2b2b2b; white-space: nowrap; }
.search span { padding-top: 2px; }
.app { width: 45px; height: 60px; margin-right: 13.500px; display: flex; align-items: center; justify-content: center; border-bottom: 3px solid transparent; padding-top: 1px; flex: none; }
.app.current { width: 57px; margin-right: 8px; background: #6b6757; border-bottom-color: #fde8a6; }
.app.run { border-bottom-color: #fde8a6; }
.app.multi { border-image: linear-gradient(to right, #fde8a6 70%, #cbbd8e 70%) 3; border-style: solid; border-width: 0 0 3px; }
.tray { margin-left: -5.500px; }
.lang { width: 66px; padding-left: 13px; color: #fff; font-size: 17.500px; letter-spacing: -0.5px; line-height: 61px; }
.clock { width: 95px; color: #fff; font-size: 18px; letter-spacing: -0.3px; line-height: 28px; display: flex; flex-direction: column; text-align: center; padding-top: 2px; white-space: nowrap; }
.notif { margin-left: 22px; }
.ps { font: bold 17px "Open Sans", sans-serif; fill: #dff5ff; }
.r { font: 21px "Liberation Serif", serif; fill: #fff; }
.cmd { font: 8px "Liberation Mono", monospace; fill: #ccc; }
```
